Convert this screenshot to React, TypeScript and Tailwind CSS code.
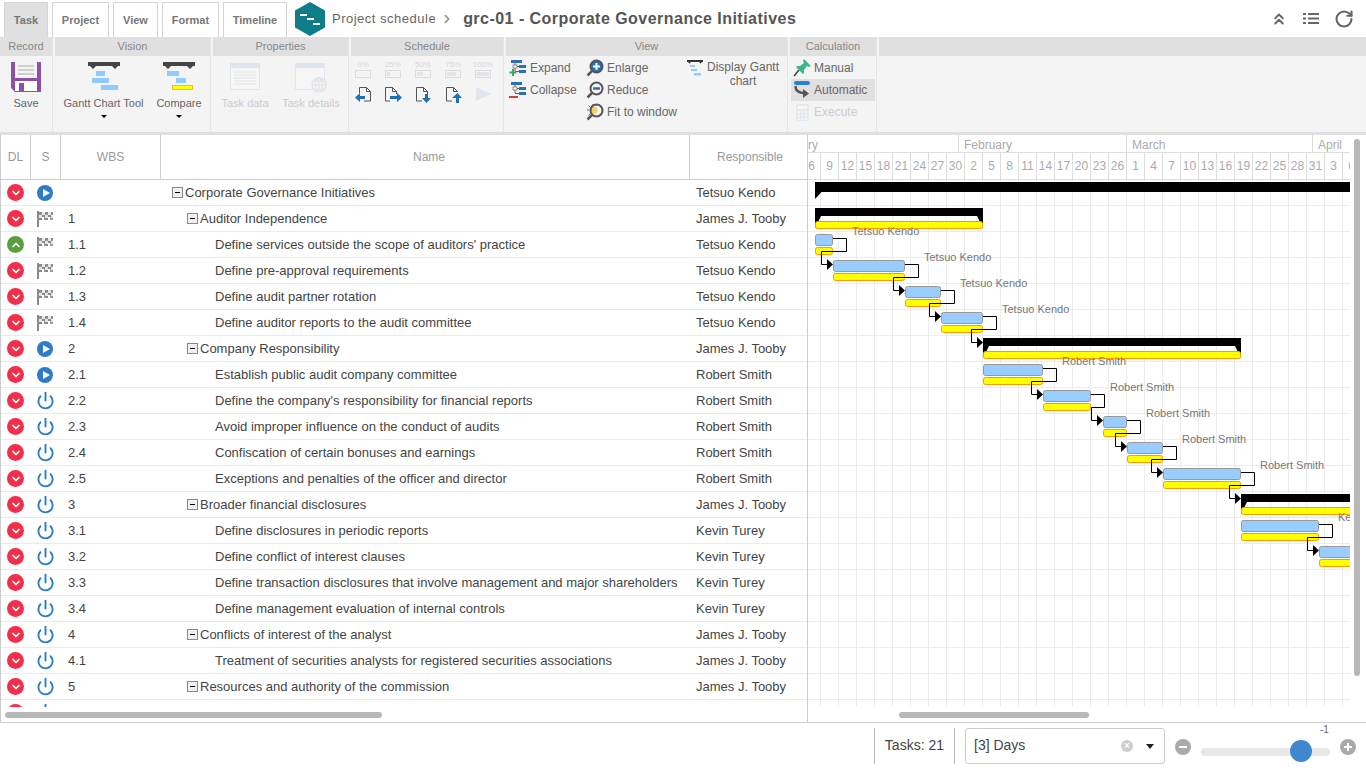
import React from 'react';
import { ChevronDown, ChevronRight, ChevronUp, ChevronsUp, Power, RotateCw } from 'lucide-react';

const rows = [
  { dl: 'down', s: 'play', wbs: '', name: 'Corporate Governance Initiatives', who: 'Tetsuo Kendo', level: 0 },
  { dl: 'down', s: 'flag', wbs: '1', name: 'Auditor Independence', who: 'James J. Tooby', level: 1 },
  { dl: 'up', s: 'flag', wbs: '1.1', name: "Define services outside the scope of auditors' practice", who: 'Tetsuo Kendo', level: 2 },
  { dl: 'down', s: 'flag', wbs: '1.2', name: 'Define pre-approval requirements', who: 'Tetsuo Kendo', level: 2 },
  { dl: 'down', s: 'flag', wbs: '1.3', name: 'Define audit partner rotation', who: 'Tetsuo Kendo', level: 2 },
  { dl: 'down', s: 'flag', wbs: '1.4', name: 'Define auditor reports to the audit committee', who: 'Tetsuo Kendo', level: 2 },
  { dl: 'down', s: 'play', wbs: '2', name: 'Company Responsibility', who: 'James J. Tooby', level: 1 },
  { dl: 'down', s: 'play', wbs: '2.1', name: 'Establish public audit company committee', who: 'Robert Smith', level: 2 },
  { dl: 'down', s: 'power', wbs: '2.2', name: "Define the company's responsibility for financial reports", who: 'Robert Smith', level: 2 },
  { dl: 'down', s: 'power', wbs: '2.3', name: 'Avoid improper influence on the conduct of audits', who: 'Robert Smith', level: 2 },
  { dl: 'down', s: 'power', wbs: '2.4', name: 'Confiscation of certain bonuses and earnings', who: 'Robert Smith', level: 2 },
  { dl: 'down', s: 'power', wbs: '2.5', name: 'Exceptions and penalties of the officer and director', who: 'Robert Smith', level: 2 },
  { dl: 'down', s: 'power', wbs: '3', name: 'Broader financial disclosures', who: 'James J. Tooby', level: 1 },
  { dl: 'down', s: 'power', wbs: '3.1', name: 'Define disclosures in periodic reports', who: 'Kevin Turey', level: 2 },
  { dl: 'down', s: 'power', wbs: '3.2', name: 'Define conflict of interest clauses', who: 'Kevin Turey', level: 2 },
  { dl: 'down', s: 'power', wbs: '3.3', name: 'Define transaction disclosures that involve management and major shareholders', who: 'Kevin Turey', level: 2 },
  { dl: 'down', s: 'power', wbs: '3.4', name: 'Define management evaluation of internal controls', who: 'Kevin Turey', level: 2 },
  { dl: 'down', s: 'power', wbs: '4', name: 'Conflicts of interest of the analyst', who: 'James J. Tooby', level: 1 },
  { dl: 'down', s: 'power', wbs: '4.1', name: 'Treatment of securities analysts for registered securities associations', who: 'James J. Tooby', level: 2 },
  { dl: 'down', s: 'power', wbs: '5', name: 'Resources and authority of the commission', who: 'James J. Tooby', level: 1 },
  { dl: 'down', s: 'power', wbs: '', name: '', who: '', level: 2 },
];

const days = [6, 9, 12, 15, 18, 21, 24, 27, 30, 2, 5, 8, 11, 14, 17, 20, 23, 26, 1, 4, 7, 10, 13, 16, 19, 22, 25, 28, 31, 3, 6];

// x is relative to the chart's left edge (screen x - 808), row is the table row index
const summaries = [
  { row: 1, from: 7, to: 175 },
  { row: 6, from: 175, to: 433 },
  { row: 12, from: 433, to: 560 },
];

const tasks = [
  { row: 2, from: 7, to: 25, label: 'Tetsuo Kendo', lx: 44 },
  { row: 3, from: 25, to: 97, label: 'Tetsuo Kendo', lx: 116 },
  { row: 4, from: 97, to: 133, label: 'Tetsuo Kendo', lx: 152 },
  { row: 5, from: 133, to: 175, label: 'Tetsuo Kendo', lx: 194 },
  { row: 7, from: 175, to: 235, label: 'Robert Smith', lx: 254 },
  { row: 8, from: 235, to: 283, label: 'Robert Smith', lx: 302 },
  { row: 9, from: 295, to: 319, label: 'Robert Smith', lx: 338 },
  { row: 10, from: 319, to: 355, label: 'Robert Smith', lx: 374 },
  { row: 11, from: 355, to: 433, label: 'Robert Smith', lx: 452 },
  { row: 13, from: 433, to: 511, label: 'Kevin Turey', lx: 530 },
  { row: 14, from: 511, to: 590, label: '', lx: 0 },
];

const links = [
  { a: 0, toRow: 3, toX: 25 },
  { a: 1, toRow: 4, toX: 97 },
  { a: 2, toRow: 5, toX: 133 },
  { a: 3, toRow: 6, toX: 175 },
  { a: 4, toRow: 8, toX: 235 },
  { a: 5, toRow: 9, toX: 295 },
  { a: 6, toRow: 10, toX: 319 },
  { a: 7, toRow: 11, toX: 355 },
  { a: 8, toRow: 12, toX: 433 },
  { a: 9, toRow: 14, toX: 511 },
];

const GanttIcon = ({ compare }: { compare?: boolean }) => (
  <svg width="32" height="28" viewBox="0 0 32 28">
    <path d="M0 0h32v4h-2l-3 3-3-3H8L5 7 2 4H0z" fill="#444" />
    {compare ? (
      <>
        <rect x="4" y="9" width="12" height="5" fill="#8fcbff" />
        <rect x="13" y="16" width="10" height="5" fill="#8fcbff" />
        <rect x="9.5" y="23.5" width="20" height="4" fill="#ffff00" stroke="#e6c800" />
      </>
    ) : (
      <>
        <rect x="8" y="9" width="9" height="5" fill="#8fcbff" />
        <rect x="4" y="16" width="17" height="5" fill="#8fcbff" />
        <rect x="13" y="23" width="17" height="5" fill="#8fcbff" />
      </>
    )}
  </svg>
);

const SaveIcon = () => (
  <svg width="30" height="30" viewBox="0 0 30 30">
    <path d="M0 0h30v30H4l-4-4z" fill="#8e4fa8" />
    <rect x="4" y="0" width="22" height="16" fill="#f4f4f4" />
    <path d="M7 4h16M7 8h16M7 12h16" stroke="#aaa" strokeWidth="1" />
    <rect x="4" y="19" width="22" height="10" fill="#fff" />
    <rect x="8" y="21" width="5" height="8" fill="#8e4fa8" />
  </svg>
);

const TaskDataIcon = () => (
  <svg width="30" height="27" viewBox="0 0 30 27">
    <rect x="0.5" y="0.5" width="29" height="26" fill="#f6f6f6" stroke="#e2e6ea" />
    <rect x="0" y="0" width="30" height="5" fill="#dfe5ec" />
    <path d="M4 9h22M4 12h22M4 15h22M4 18h22M4 21h22" stroke="#e0e4e8" />
  </svg>
);

const TaskDetailsIcon = () => (
  <svg width="32" height="29" viewBox="0 0 32 29">
    <rect x="0.5" y="0.5" width="29" height="26" fill="#f6f6f6" stroke="#e2e6ea" />
    <rect x="0" y="0" width="30" height="5" fill="#dfe5ec" />
    <circle cx="24" cy="22" r="7" fill="#f4f4f4" stroke="#dfe3e8" strokeWidth="1.4" />
    <path d="M17 22h14M24 15v14M19 18h10M19 26h10" stroke="#dfe3e8" />
    <ellipse cx="24" cy="22" rx="3.5" ry="7" fill="none" stroke="#dfe3e8" />
  </svg>
);

const ProgressIcon = ({ label, fill }: { label: string; fill: number }) => (
  <div className="flex w-[16px] flex-col items-center">
    <span className="h-[9px] whitespace-nowrap text-[8px] leading-[9px] text-[#d8d8d8]">{label}</span>
    <div className="mt-[1px] h-[8px] w-[16px] border border-[#dcdcdc] p-[1px]">
      <div className="h-full bg-[#dfe5ec]" style={{ width: `${fill}%` }} />
    </div>
  </div>
);

const DocArrow = ({ dir }: { dir: 'left' | 'right' | 'down' | 'up' }) => (
  <svg width="18" height="16" viewBox="0 0 18 16">
    {dir === 'left' && (
      <>
        <path d="M4.500 6V0.500h7l4 4v9.500H9M11.500 0.500v4h4" fill="none" stroke="#555" />
        <path d="M5 6L0 10.500 5 15v-3h5V9H5z" fill="#1f6fb5" />
      </>
    )}
    {dir === 'right' && (
      <>
        <path d="M5 14H0.500V0.500h7l4 4V7M7.500 0.500v4h4" fill="none" stroke="#555" />
        <path d="M12 6l5 4.500-5 4.500v-3H5V9h7z" fill="#1f6fb5" />
      </>
    )}
    {dir === 'down' && (
      <>
        <path d="M7 14H1.500V0.500h7l4 4V7M8.500 0.500v4h4" fill="none" stroke="#555" />
        <path d="M10 7h3v4h3l-4.500 5L7 11h3z" fill="#1f6fb5" />
      </>
    )}
    {dir === 'up' && (
      <>
        <path d="M7 14H1.500V0.500h7l4 4V5M8.500 0.500v4h4" fill="none" stroke="#555" />
        <path d="M12.500 6l4.500 5h-3v5h-3v-5H7z" fill="#1f6fb5" />
      </>
    )}
  </svg>
);

const TreeIcon = ({ minus }: { minus?: boolean }) => (
  <svg width="18" height="17" viewBox="0 0 18 17">
    <rect x="2" y="0" width="11" height="3" fill="#2f6fb0" />
    <rect x="10" y="5" width="7" height="3" fill="#2f6fb0" />
    <rect x="10" y="10" width="7" height="3" fill="#2f6fb0" />
    <path d="M6 3v8M6 6.500h4M6 11.500h4" stroke="#666" fill="none" />
    <rect x="4" y="5" width="4" height="3" fill="#fff" stroke="#666" strokeWidth="0.7" />
    {minus ? (
      <rect x="0" y="14" width="9" height="2" fill="#d0402c" />
    ) : (
      <path d="M4 9v7M0.500 12.500h7" stroke="#3aa76d" strokeWidth="2" />
    )}
  </svg>
);

const LensIcon = ({ kind }: { kind: 'plus' | 'minus' | 'fit' }) => (
  <svg width="18" height="18" viewBox="0 0 18 18">
    {kind === 'fit' && <path d="M7 1v2M1 7h2M2.500 2.500l1.500 1.500M2.500 12l1.500-1M11 2l-1 1" stroke="#666" />}
    {kind === 'fit' && <circle cx="8" cy="7" r="3.500" fill="#f6cf6a" />}
    <circle cx="10.500" cy="7.500" r="6" fill={kind === 'plus' ? '#2a6fb5' : 'none'} stroke="#555" strokeWidth="2" />
    <path d="M5.800 12.200L1.500 16.500" stroke="#555" strokeWidth="2.500" />
    {kind === 'plus' && <path d="M7 7.500h7M10.500 4v7" stroke="#fff" strokeWidth="2" />}
    {kind === 'minus' && <path d="M7 7.500h7" stroke="#2a6fb5" strokeWidth="2.500" />}
  </svg>
);

const PinIcon = () => (
  <svg width="18" height="18" viewBox="0 0 18 18">
    <path d="M1 17l5-6" stroke="#444" strokeWidth="1.500" />
    <path d="M11 0l7 7-2 1-2-1-3 4 0 3-1 1-7-7 1-1 3 0 4-3-1-2z" fill="#3fb58a" />
  </svg>
);

const AutoIcon = () => (
  <svg width="18" height="18" viewBox="0 0 18 18">
    <rect x="1" y="0" width="16" height="4" rx="2" fill="#2a7fd5" />
    <path d="M2.500 5c0 5 4 7 9 7" fill="none" stroke="#555" strokeWidth="2.500" />
    <path d="M10 8l6 4.500-6 4.500z" fill="#555" />
  </svg>
);

const CalcIcon = () => (
  <svg width="13" height="17" viewBox="0 0 13 17">
    <rect x="0" y="0" width="13" height="17" fill="#e4eaf0" />
    <rect x="2" y="2" width="9" height="3" fill="#f6f6f6" />
    <path d="M2 7h2v2H2zM5.500 7h2v2h-2zM9 7h2v2H9zM2 10.500h2v2H2zM5.500 10.500h2v2h-2zM9 10.500h2v2H9zM2 14h2v2H2zM5.500 14h2v2h-2zM9 14h2v2H9z" fill="#f6f6f6" />
  </svg>
);

const SmallGantt = () => (
  <svg width="16" height="16" viewBox="0 0 16 16">
    <path d="M0 0h16v2h-1l-1.500 1.500L12 2H4L2.500 3.500 1 2H0z" fill="#333" />
    <rect x="3" y="5" width="5" height="2" fill="#8fcbff" />
    <rect x="4" y="9" width="6" height="2" fill="#8fcbff" />
    <rect x="7" y="13" width="7" height="2.500" fill="#8fcbff" />
  </svg>
);

const FlagIcon = () => (
  <svg width="17" height="16" viewBox="0 0 17 16">
    <rect x="0" y="0" width="2" height="16" fill="#8a8a8a" />
    <path d="M2 1h3v3h3V1h3v3h3V1h2v8h-3V6h-3v3H7V6H5v3H2z" fill="#9c9c9c" />
    <path d="M2 1h3v2H2zM8 1h3v2H8zM14 1h2v2h-2zM5 4h3v2H5zM11 4h3v2h-3zM2 7h3v2H2zM8 7h3v2H8z" fill="#8a8a8a" />
    <path d="M5 1h3v3H5zM11 1h3v3h-3zM2 4h3v3H2zM8 4h3v3H8zM14 4h2v3h-2z" fill="#e6e6e6" />
  </svg>
);

const SectionHead = ({ children }: { children: React.ReactNode }) => (
  <div className="flex h-[19px] items-center justify-center bg-[#e0e0e0] text-[11px] text-[#888]">{children}</div>
);

const Tab = ({ label, width, active }: { label: string; width: string; active?: boolean }) => (
  <div
    className={`flex h-[35px] items-center justify-center border border-b-0 border-[#d5d5d5] text-[11px] font-bold text-[#777] ${width} ${
      active ? 'bg-[#e0e0e0]' : 'bg-white'
    }`}
  >
    {label}
  </div>
);

const ViewBtn = ({ icon, label, faded, active, pad }: { icon: React.ReactNode; label: string; faded?: boolean; active?: boolean; pad?: boolean }) => (
  <div className={`flex h-[22px] items-center gap-[3px] text-[12px] ${faded ? 'text-[#ccc]' : 'text-[#666]'} ${active ? 'bg-[#e0e0e0]' : ''} ${pad ? 'pl-[2px]' : ''}`}>
    <span className="flex w-[18px] justify-center">{icon}</span>
    <span className="whitespace-nowrap">{label}</span>
  </div>
);

const Caret = () => <div className="h-0 w-0 border-x-[3px] border-t-[3px] border-x-transparent border-t-black" />;

const Ribbon = () => (
  <div className="flex h-[98px] shrink-0 gap-[2px] border-b-[3px] border-[#e0e0e0] bg-[#f4f4f4]">
    <div className="w-[53px] shrink-0 border-r border-[#e6e6e6]">
      <SectionHead>Record</SectionHead>
      <div className="flex flex-col items-center pt-[6px] text-[11px] text-[#666]">
        <SaveIcon />
        <span className="mt-[3px]">Save</span>
      </div>
    </div>
    <div className="w-[156px] shrink-0 border-r border-[#e6e6e6]">
      <SectionHead>Vision</SectionHead>
      <div className="flex pt-[6px] text-[11px] text-[#666]">
        <div className="flex w-[97px] flex-col items-center">
          <GanttIcon />
          <span className="mt-[5px]">Gantt Chart Tool</span>
          <div className="mt-[3px]"><Caret /></div>
        </div>
        <div className="flex w-[54px] flex-col items-center">
          <GanttIcon compare />
          <span className="mt-[5px]">Compare</span>
          <div className="mt-[3px]"><Caret /></div>
        </div>
      </div>
    </div>
    <div className="w-[136px] shrink-0 border-r border-[#e6e6e6]">
      <SectionHead>Properties</SectionHead>
      <div className="flex pt-[7px] text-[11px] text-[#ccc]">
        <div className="flex w-[64px] flex-col items-center">
          <TaskDataIcon />
          <span className="mt-[5px]">Task data</span>
        </div>
        <div className="flex w-[68px] flex-col items-center">
          <TaskDetailsIcon />
          <span className="mt-[3px]">Task details</span>
        </div>
      </div>
    </div>
    <div className="w-[153px] shrink-0 border-r border-[#e6e6e6]">
      <SectionHead>Schedule</SectionHead>
      <div className="pl-[4px] pt-[4px]">
        <div className="flex gap-[14px]">
          <ProgressIcon label="0%" fill={0} />
          <ProgressIcon label="25%" fill={25} />
          <ProgressIcon label="50%" fill={50} />
          <ProgressIcon label="75%" fill={75} />
          <ProgressIcon label="100%" fill={100} />
        </div>
        <div className="mt-[9px] flex gap-[12px]">
          <DocArrow dir="left" />
          <DocArrow dir="right" />
          <DocArrow dir="down" />
          <DocArrow dir="up" />
          <div className="ml-[1px] h-0 w-0 border-y-[7.5px] border-l-[15px] border-y-transparent border-l-[#dfe5ec]" />
        </div>
      </div>
    </div>
    <div className="w-[282px] shrink-0 border-r border-[#e6e6e6]">
      <SectionHead>View</SectionHead>
      <div className="flex pl-[3px] pt-[1px]">
        <div className="w-[77px]">
          <ViewBtn icon={<TreeIcon />} label="Expand" />
          <ViewBtn icon={<TreeIcon minus />} label="Collapse" />
        </div>
        <div className="w-[101px]">
          <ViewBtn icon={<LensIcon kind="plus" />} label="Enlarge" />
          <ViewBtn icon={<LensIcon kind="minus" />} label="Reduce" />
          <ViewBtn icon={<LensIcon kind="fit" />} label="Fit to window" />
        </div>
        <div className="flex pt-[3px]">
          <SmallGantt />
          <div className="ml-[4px] w-[72px] whitespace-nowrap text-center text-[12px] leading-[14px] text-[#666]">
            Display Gantt
            <br />
            chart
          </div>
        </div>
      </div>
    </div>
    <div className="w-[87px] shrink-0 border-r border-[#e6e6e6]">
      <SectionHead>Calculation</SectionHead>
      <div className="pl-[1px] pr-[1px] pt-[1px]">
        <ViewBtn icon={<PinIcon />} label="Manual" pad />
        <ViewBtn icon={<AutoIcon />} label="Automatic" active pad />
        <ViewBtn icon={<CalcIcon />} label="Execute" faded pad />
      </div>
    </div>
    <div className="flex-1">
      <SectionHead>{''}</SectionHead>
    </div>
  </div>
);

const StatusIcon = ({ s }: { s: string }) => {
  if (s === 'flag') return <FlagIcon />;
  if (s === 'play')
    return (
      <div className="flex h-[16px] w-[16px] items-center justify-center rounded-full bg-[#2e7cc8]">
        <div className="ml-[2px] h-0 w-0 border-y-[4.5px] border-l-[7px] border-y-transparent border-l-white" />
      </div>
    );
  return <Power size={19} strokeWidth={2.4} className="text-[#2e7cc8]" />;
};

const Table = () => (
  <div className="flex w-[808px] shrink-0 flex-col border-x border-[#ccc]">
    <div className="flex h-[45px] shrink-0 border-b border-[#ccc] text-[12px] text-[#999]">
      <div className="flex w-[30px] items-center justify-center border-r border-[#ccc]">DL</div>
      <div className="flex w-[30px] items-center justify-center border-r border-[#ccc]">S</div>
      <div className="flex w-[100px] items-center justify-center border-r border-[#ccc]">WBS</div>
      <div className="flex w-[529px] items-center justify-center border-r border-[#ccc] pl-[8px]">Name</div>
      <div className="flex flex-1 items-center justify-center pl-[3px]">Responsible</div>
    </div>
    <div className="min-h-0 flex-1 overflow-hidden">
      {rows.map((r, i) => (
        <div key={i} className="flex h-[26px] items-center border-b border-[#eaeaea] text-[13px] text-[#444]">
          <div className="flex w-[29px] justify-center">
            <div className={`flex h-[17px] w-[17px] items-center justify-center rounded-full ${r.dl === 'up' ? 'bg-[#5a9e3e]' : 'bg-[#f0304a]'}`}>
              {r.dl === 'up' ? <ChevronUp size={12} strokeWidth={3.5} className="text-white" /> : <ChevronDown size={12} strokeWidth={3.5} className="text-white" />}
            </div>
          </div>
          <div className="flex w-[30px] justify-center">
            <StatusIcon s={r.s} />
          </div>
          <div className="w-[101px] pl-[8px]">{r.wbs}</div>
          <div className={`flex w-[529px] items-center ${r.level === 0 ? 'pl-[11px]' : r.level === 1 ? 'pl-[26px]' : 'pl-[54px]'}`}>
            {r.level < 2 && (
              <div className="mr-[2px] flex h-[11px] w-[11px] items-center justify-center border border-[#888] bg-[#f0f0f0]">
                <div className="h-[1px] w-[5px] bg-black" />
              </div>
            )}
            <span className="whitespace-nowrap">{r.name}</span>
          </div>
          <div className="flex-1 whitespace-nowrap pl-[6px]">{r.who}</div>
        </div>
      ))}
    </div>
    <div className="h-[15px] shrink-0 pl-[4px] pt-[5px]">
      <div className="h-[6px] w-[377px] rounded-full bg-[#b8b8b8]" />
    </div>
  </div>
);

const GanttChart = () => (
  <svg width="542" height="526" viewBox="0 0 542 526" className="block shrink-0 font-['Liberation_Sans',Arial,sans-serif]">
    {Array.from({ length: 30 }).map((_, i) => (
      <line key={i} x1={12.5 + i * 18} x2={12.5 + i * 18} y1="0" y2="526" stroke="#ececec" />
    ))}
    {Array.from({ length: 20 }).map((_, i) => (
      <line key={i} x1="0" x2="542" y1={25.5 + i * 26} y2={25.5 + i * 26} stroke="#ececec" />
    ))}
    <path d="M7 2h535v10H13.500L7 19z" fill="#000" />
    {summaries.map((b) => {
      const y = b.row * 26;
      return (
        <g key={b.row}>
          <path d={`M${b.from} ${y + 2}H${b.to}V${y + 22}L${b.to - 6} ${y + 10}H${b.from + 6}L${b.from} ${y + 22}z`} fill="#000" />
          <rect x={b.from + 0.5} y={y + 15.5} width={b.to - b.from - 1} height="7" rx="2" fill="#ffff00" stroke="#ff9900" />
        </g>
      );
    })}
    {tasks.map((t) => {
      const y = t.row * 26;
      return (
        <g key={t.row}>
          <rect x={t.from + 0.5} y={y + 2.5} width={t.to - t.from - 1} height="11" rx="2" fill="#99ccff" stroke="#999" />
          <rect x={t.from + 0.5} y={y + 15.5} width={t.to - t.from - 1} height="7" rx="2" fill="#ffff00" stroke="#ff9900" />
        </g>
      );
    })}
    {links.map((l) => {
      const t = tasks[l.a];
      const y = t.row * 26;
      const ty = l.toRow * 26 + 6;
      return (
        <g key={l.a}>
          <path
            d={`M${t.to} ${y + 6.500}H${t.to + 13.500}V${y + 19.500}H${l.toX - 11.500}V${ty + 0.500}H${l.toX - 6}`}
            fill="none"
            stroke="#000"
            strokeWidth="1"
          />
          <path d={`M${l.toX - 6} ${ty - 5}L${l.toX} ${ty + 0.500}L${l.toX - 6} ${ty + 6}z`} fill="#000" />
        </g>
      );
    })}
    {tasks.map((t) => (
      <text key={t.row} x={t.lx} y={t.row * 26 + 3} fontSize="11" fill="#777">
        {t.label}
      </text>
    ))}
  </svg>
);

const Timeline = () => (
  <div className="flex min-w-0 flex-1 flex-col overflow-hidden">
    <div className="flex w-[542px] shrink-0 flex-col overflow-hidden">
      <div className="flex h-[18px] items-center border-b border-[#ddd] text-[12px] leading-[20px] text-[#aaa]">
        <div className="h-full w-[151px] overflow-hidden border-r border-[#ddd]">ry</div>
        <div className="h-full w-[168px] border-r border-[#ddd] pl-[5px]">February</div>
        <div className="h-full w-[186px] border-r border-[#ddd] pl-[5px]">March</div>
        <div className="h-full pl-[5px]">April</div>
      </div>
      <div className="-ml-[5px] flex h-[27px] border-b border-[#ddd] text-[12px] text-[#aaa]">
        {days.map((d, i) => (
          <div key={i} className="flex w-[18px] shrink-0 items-center justify-center border-r border-[#ddd]">
            {d}
          </div>
        ))}
      </div>
    </div>
    <GanttChart />
    <div className="flex h-[16px] shrink-0 items-start pl-[91px] pt-[6px]">
      <div className="h-[6px] w-[190px] rounded-full bg-[#b8b8b8]" />
    </div>
  </div>
);

const Footer = () => (
  <div className="flex h-[45px] shrink-0 items-start justify-end pt-[5px] text-[14px] text-[#444]">
    <div className="flex h-[36px] items-center border-x border-[#bbb] px-[10px] pb-[2px]">Tasks: 21</div>
    <div className="ml-[10px] flex h-[36px] w-[200px] items-center rounded-[3px] border border-[#ccc] pl-[8px] pr-[10px]">
      <span className="flex-1 pb-[2px]">[3] Days</span>
      <div className="mr-[13px] flex h-[12px] w-[12px] items-center justify-center rounded-full bg-[#ccc] text-[10px] font-bold leading-none text-white">×</div>
      <div className="h-0 w-0 border-x-[4px] border-t-[5px] border-x-transparent border-t-[#222]" />
    </div>
    <div className="ml-[10px] mt-[11px] flex h-[16px] w-[16px] items-center justify-center rounded-full bg-[#aaa]">
      <div className="h-[2px] w-[8px] bg-white" />
    </div>
    <div className="relative ml-[10px] mt-[20px] h-[8px] w-[129px] rounded-full bg-[#e8e8e8]">
      <div className="absolute left-[89px] top-[-8px] h-[22px] w-[22px] rounded-full bg-[#3f88cf]" />
      <span className="absolute left-[119px] top-[-26px] text-[10px] text-[#666]">-1</span>
    </div>
    <div className="relative ml-[10px] mr-[10px] mt-[11px] flex h-[16px] w-[16px] items-center justify-center rounded-full bg-[#aaa]">
      <div className="h-[2px] w-[8px] bg-white" />
      <div className="absolute h-[8px] w-[2px] bg-white" />
    </div>
  </div>
);

export default function App() {
  return (
    <div className="flex h-screen w-[1366px] flex-col overflow-hidden bg-white font-['Liberation_Sans',Arial,sans-serif]">
      <div className="flex h-[37px] shrink-0 items-end pl-[4px]">
        <div className="flex gap-[4px]">
          <Tab label="Task" width="w-[44px]" active />
          <Tab label="Project" width="w-[57px]" />
          <Tab label="View" width="w-[45px]" />
          <Tab label="Format" width="w-[57px]" />
          <Tab label="Timeline" width="w-[64px]" />
        </div>
        <div className="flex h-[37px] flex-1 items-center pl-[7px]">
          <svg width="32" height="34" viewBox="0 0 32 34">
            <path d="M16 0l15 8.500v17L16 34 1 25.500v-17z" fill="#0f7c8a" />
            <path d="M6 12h7v2H6zM13 16h7v2h-7zM19 21h7v2h-7z" fill="#fff" />
          </svg>
          <span className="ml-[6px] text-[13px] font-medium tracking-[0.5px] text-[#666]">Project schedule</span>
          <ChevronRight size={14} strokeWidth={2.5} className="ml-[4px] text-[#888]" />
          <span className="ml-[9px] text-[16px] font-bold tracking-[0.47px] text-[#555]">grc-01 - Corporate Governance Initiatives</span>
          <div className="ml-auto flex items-center gap-[15px] pr-[12px] text-[#666]">
            <ChevronsUp size={18} strokeWidth={2.5} />
            <svg width="16" height="11" viewBox="0 0 16 11">
              <path d="M0 0h3v2H0zM5 0h11v2H5zM0 4.500h3v2H0zM5 4.500h11v2H5zM0 9h3v2H0zM5 9h11v2H5z" fill="#666" />
            </svg>
            <RotateCw size={20} strokeWidth={2.5} />
          </div>
        </div>
      </div>
      <Ribbon />
      <div className="flex min-h-0 flex-1 border-b border-[#ccc]">
        <Table />
        <Timeline />
        <div className="w-[16px] shrink-0 pl-[4px] pt-[4px]">
          <div className="h-[537px] w-[6px] rounded-full bg-[#b8b8b8]" />
        </div>
      </div>
      <Footer />
    </div>
  );
}
